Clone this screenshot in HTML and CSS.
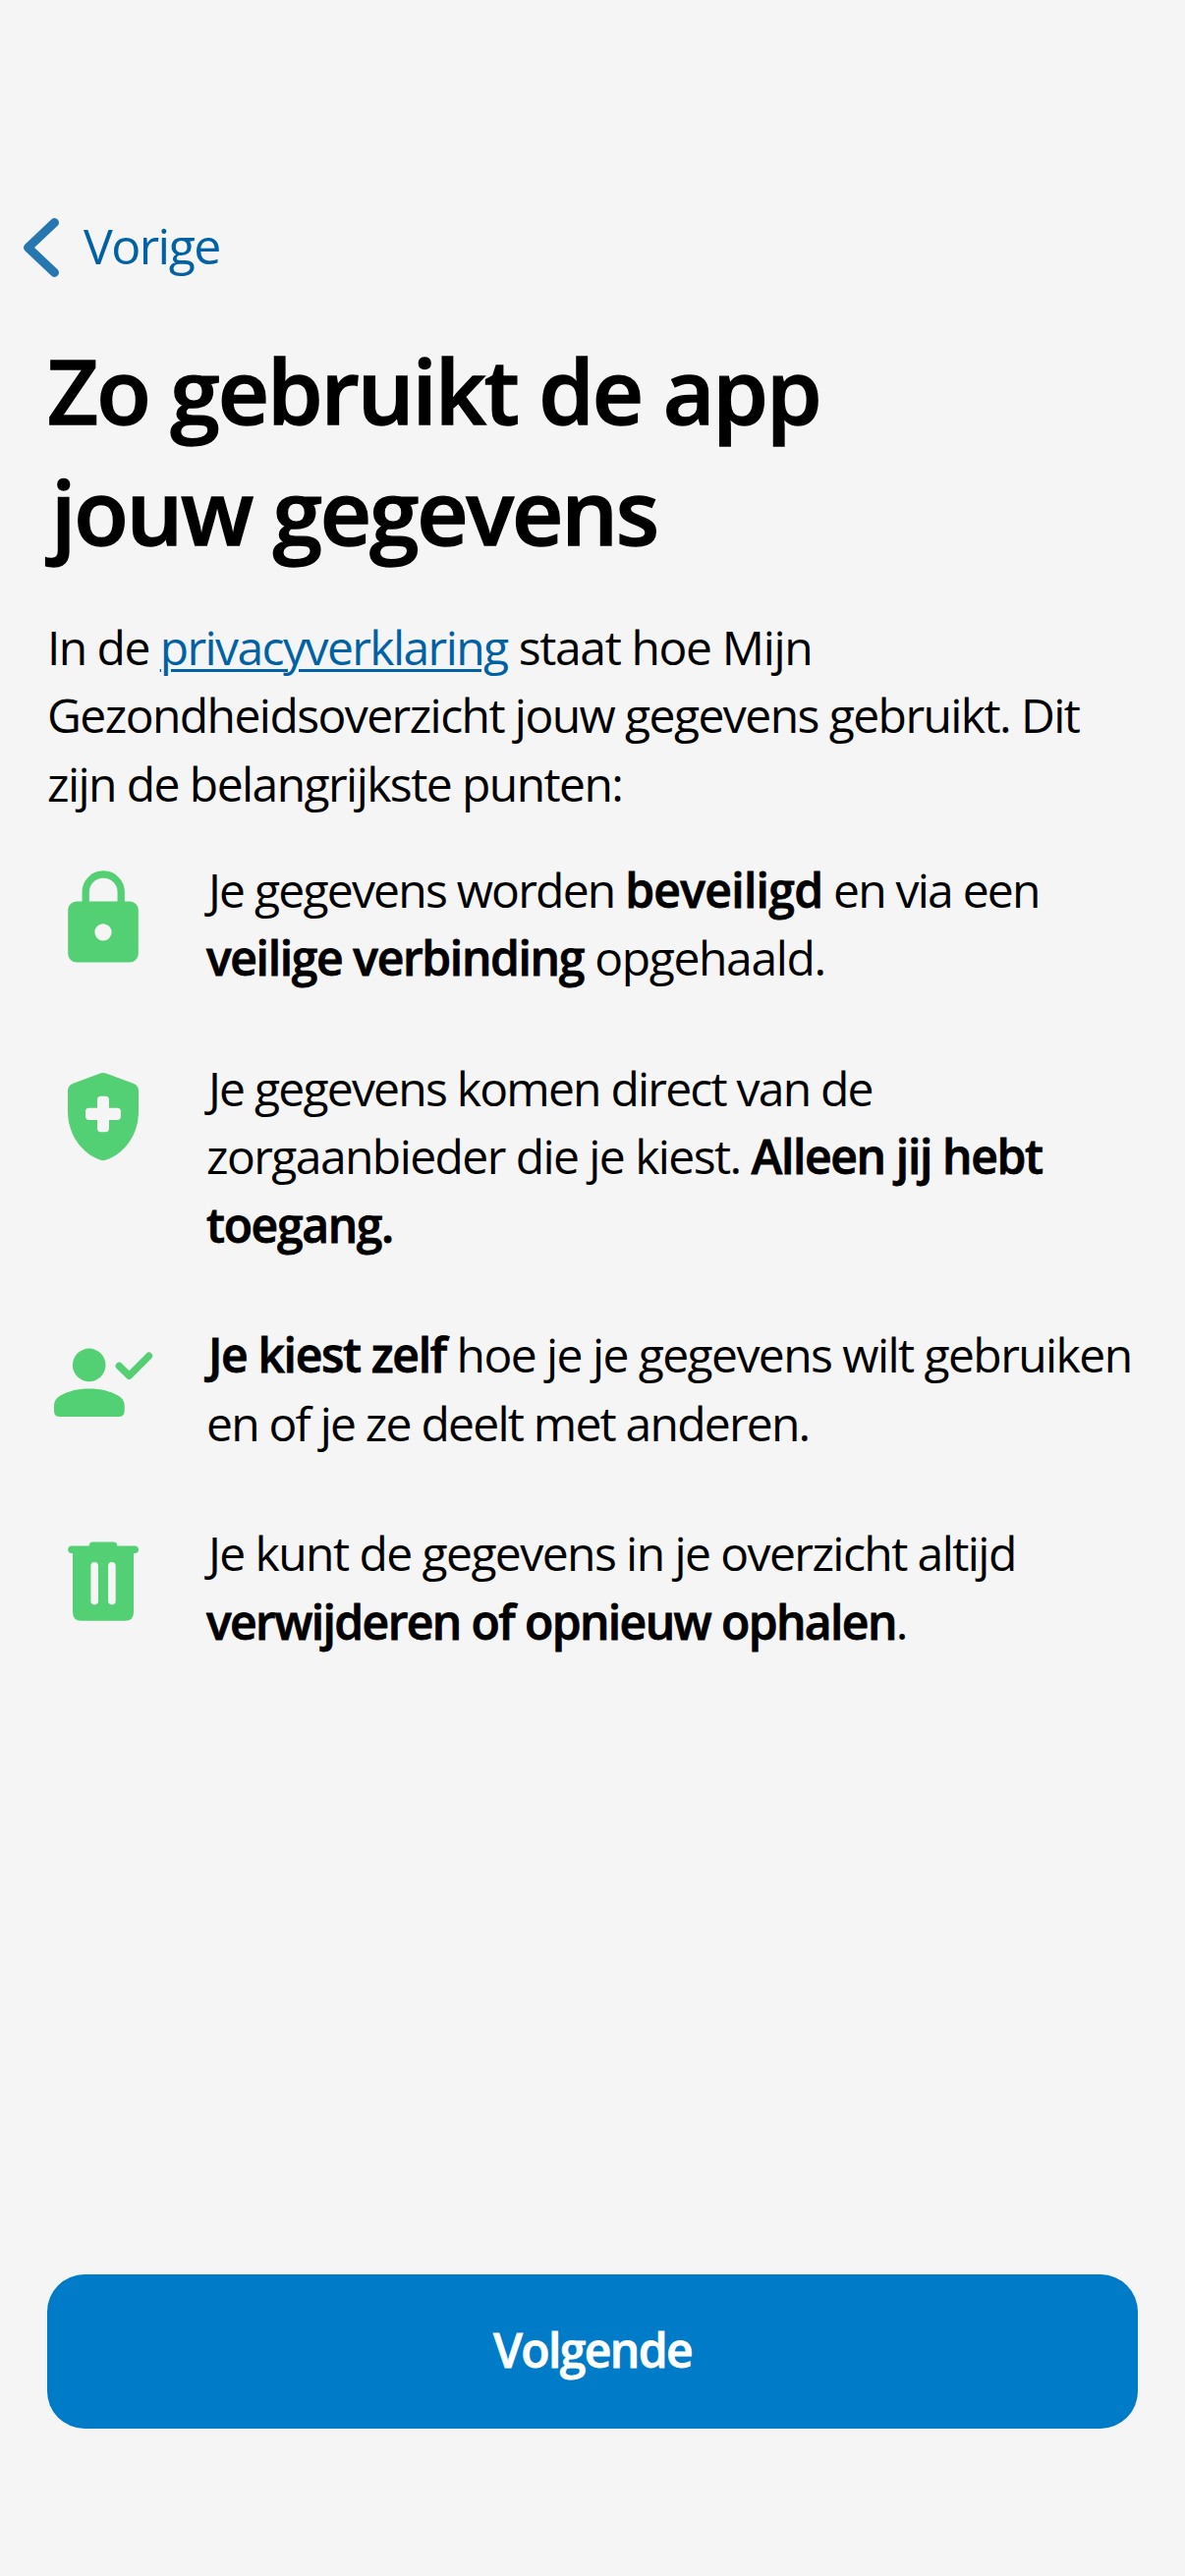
FILE: index.html
```html
<!DOCTYPE html>
<html lang="nl">
<head>
<meta charset="utf-8">
<title>Zo gebruikt de app jouw gegevens</title>
<link rel="stylesheet" href="styles.css">
</head>
<body>
<main class="screen">
  <a class="back" href="#">
    <svg class="back-icon" viewBox="0 0 36 60"><path d="M31.5 4.5 4.5 30l27 25.5"/></svg>
    <span class="back-label">Vorige</span>
  </a>
  <h1 class="title"><span class="line">Zo gebruikt de app</span><span class="line title-second">jouw gegevens</span></h1>
  <p class="intro">
    <span class="line">In de <a class="link" href="#">privacyverklaring</a><span class="loose"> staat hoe Mijn</span></span>
    <span class="line">Gezondheidsoverzicht jouw gegevens gebruikt. Dit</span>
    <span class="line">zijn de belangrijkste punten:</span>
  </p>
  <ul class="points">
    <li class="point">
      <svg class="icon" viewBox="0 0 108 108"><path class="stroke" d="M36.2 41V30a18 18 0 0 1 36 0v11"/><rect x="18.2" y="39.5" width="71.6" height="62" rx="8.8"/><circle class="hole" cx="54" cy="70.8" r="8.6"/></svg>
      <p class="text">
        <span class="line from-j tight">Je gegevens worden <b class="wide">beveiligd</b> en via een</span>
        <span class="line loose"><b>veilige verbinding</b> opgehaald.</span>
      </p>
    </li>
    <li class="point">
      <svg class="icon" viewBox="0 0 108 108"><path d="M51.8 12.3q2.2-.8 4.4 0L84.6 22.8Q90 24.8 90 30.6V51c0 24-14.5 43.5-33.5 49.8q-2.5.8-5 0C32.5 94.5 18 75 18 51V30.6q0-5.8 5.4-7.8z"/><rect class="hole" x="48" y="35.8" width="12" height="36.4" rx="3.7"/><rect class="hole" x="36" y="47.7" width="36" height="12.3" rx="3.7"/></svg>
      <p class="text">
        <span class="line from-j tight">Je gegevens komen direct van de</span>
        <span class="line">zorgaanbieder die je kiest. <b>Alleen jij hebt</b></span>
        <span class="line"><b>toegang.</b></span>
      </p>
    </li>
    <li class="point">
      <svg class="icon" viewBox="0 0 108 108"><circle cx="39.7" cy="38.4" r="16.8"/><path d="M4 80q0-7 6.5-10.5C18 65 28 62.4 39.8 62.4S61.5 65 69.2 69.5q6.5 3.5 6.5 10.5v5q0 6-6 6H10q-6 0-6-6z"/><path class="stroke" d="m70.3 39.3 10.2 10L100.5 29.2"/></svg>
      <p class="text">
        <span class="line from-j"><b>Je kiest zelf</b> hoe je je gegevens wilt gebruiken</span>
        <span class="line tight">en of je ze deelt met anderen.</span>
      </p>
    </li>
    <li class="point">
      <svg class="icon" viewBox="0 0 108 108"><path d="M22 20.4H39.7q0-4 4-4H64.3q4 0 4 4H86.2a3.8 3.8 0 0 1 0 7.6H85V88q0 8.7-8.7 8.7H31.7Q23 96.7 23 88V28H22a3.8 3.8 0 0 1 0-7.6z"/><rect class="hole" x="41.4" y="37" width="7.6" height="43.4" rx="3.8"/><rect class="hole" x="59.1" y="37" width="7.6" height="43.4" rx="3.8"/></svg>
      <p class="text">
        <span class="line from-j">Je kunt de gegevens in je overzicht altijd</span>
        <span class="line"><b class="narrow">verwijderen of opnieuw ophalen</b>.</span>
      </p>
    </li>
  </ul>
  <button class="next" type="button">Volgende</button>
</main>
</body>
</html>
```
FILE: styles.css
```css
* {
  box-sizing: border-box;
}

body {
  margin: 0;
  background: #f5f5f5;
  color: #000;
  font: 400 48px/69.67px "Open Sans", "Noto Sans", sans-serif;
  letter-spacing: -1.57px;
}

.screen {
  display: flex;
  flex-direction: column;
  height: 2622px;
  padding: 222px 48px 150px;
}

.line {
  display: block;
  white-space: nowrap;
}

.back {
  display: flex;
  align-self: flex-start;
  gap: 25px;
  height: 60px;
  margin-left: -24px;
  color: #0062a5;
  text-decoration: none;
}

.back-icon {
  width: 36px;
  height: 60px;
  fill: none;
  stroke: #2677b0;
  stroke-width: 9;
  stroke-linecap: round;
  stroke-linejoin: round;
}

.back-label {
  font-size: 50px;
  line-height: 57px;
}

.title {
  margin: 53.5px 0 42px;
  font-size: 91px;
  font-weight: 600;
  line-height: 123px;
  letter-spacing: -2.09px;
  -webkit-text-stroke: 1.4px currentColor;
}

.title-second {
  padding-left: 4px;
  letter-spacing: -2.2px;
}

.intro {
  margin: 0 0 38px;
}

.link {
  color: #0062a5;
  text-decoration-thickness: 3px;
  text-underline-offset: 4px;
}

.points {
  display: flex;
  flex-direction: column;
  gap: 62.7px;
  margin: 0;
  padding: 0;
  list-style: none;
}

.point {
  display: grid;
  grid-template-columns: 108px 1fr;
  column-gap: 51px;
  padding-left: 3px;
}

.icon {
  width: 108px;
  height: 108px;
  margin-top: 7px;
  fill: #53d073;
}

.icon .stroke {
  fill: none;
  stroke: #53d073;
  stroke-width: 7.3;
  stroke-linecap: round;
  stroke-linejoin: round;
}

.icon .hole {
  fill: #f5f5f5;
}

.text {
  margin: 0;
}

.from-j {
  padding-left: 2px;
}

.tight {
  letter-spacing: -1.78px;
}

.loose {
  letter-spacing: -1.35px;
}

b {
  font-weight: 600;
  letter-spacing: -1.35px;
  -webkit-text-stroke: 0.8px currentColor;
}

.wide {
  letter-spacing: -0.7px;
}

.narrow {
  letter-spacing: -1.6px;
}

.next {
  width: 100%;
  height: 157px;
  margin-top: auto;
  padding: 0 0 4px;
  border: 0;
  border-radius: 38px;
  background: #007bc7;
  color: #fff;
  font: 600 48px "Open Sans", "Noto Sans", sans-serif;
  letter-spacing: -1.6px;
  -webkit-text-stroke: 0.8px currentColor;
}
```
